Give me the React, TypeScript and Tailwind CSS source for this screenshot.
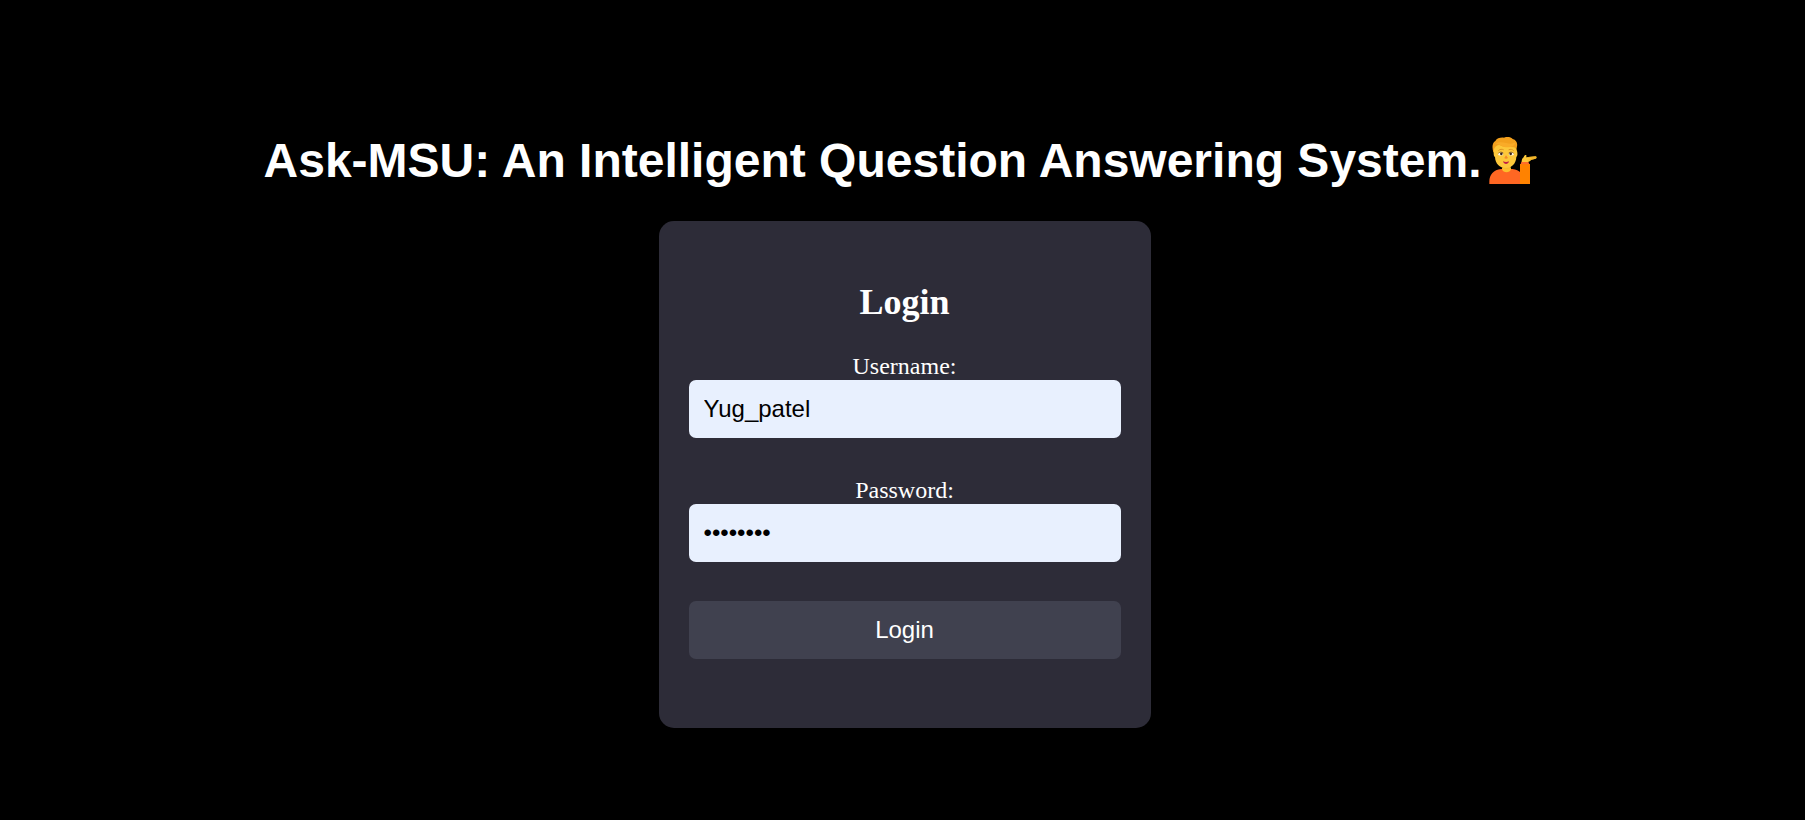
import { useState } from "react";

function TippingHandIcon() {
  return (
    <svg viewBox="30 36 144 144" className="size-12 shrink-0" role="img" aria-label="Person tipping hand">
      <path d="M70 118h25v22H70z" fill="#f5b82e" />
      <path d="M31 177v-8c0-20 13-35 35-37h4c3 10 22 10 25 0h5c12 1 19 5 24 10v35z" fill="#ff6723" />
      <path d="M69 128c6 4 20 4 27 0v5c-3 12-24 12-27 0z" fill="#fcbf2c" />
      <path d="M123 117h30v60h-30z" fill="#ff8200" />
      <path d="M127 110h21l3 8h-26z" fill="#ff6d2b" />
      <path d="M128 111c0-7 2-11 6-14 1-6 5-9 8-6 1 2 0 4-1 6l27-3c6 0 6 5 2 7l-14 4c-3 5-7 6-13 6z" fill="#fdc93b" />
      <path d="M141 97l27-3c6 0 6 5 2 7l-14 4c-4 1-9 1-13 0 6-1 12-3 16-6-6 1-12 1-18-2z" fill="#e9a71e" opacity=".6" />
      <path d="M43 82c-4-14-4-28 6-34 5-9 15-11 26-10 8-4 20-3 26 4 11 3 15 12 13 22l-4 22z" fill="#f3a01d" />
      <path d="M47 68c-3 5-3 11-3 17 0 6 1 10 4 11 1 20 14 33 32 33s31-13 32-33c4-3 4-12 2-18-2-6-5-10-9-11-8-1-15-1-23-1-9 0-14-3-21-6-7 1-11 4-14 8z" fill="#fdc73a" />
      <path d="M50 56c10-7 22-4 32-2 10 3 20 3 28-2-3 11-13 15-24 15-13 0-23-10-36-11z" fill="#f9ab28" />
      <path d="M59 76c4-4 10-4 14-2m17 0c5-2 10-1 13 2" fill="none" stroke="#dc9420" strokeWidth="3" strokeLinecap="round" />
      <ellipse cx="65" cy="87" rx="8" ry="4.5" fill="#fff8e6" />
      <ellipse cx="97" cy="87" rx="8" ry="4.5" fill="#fff8e6" />
      <circle cx="67" cy="86.5" r="4" fill="#3b241b" />
      <circle cx="95" cy="86.5" r="4" fill="#3b241b" />
      <path d="M58 85c3-4 10-5 15-1m16 0c5-4 11-3 15 1" fill="none" stroke="#6b4218" strokeWidth="2" />
      <path d="M81 91l-5 8c2 3 8 3 11 0z" fill="#f38a2a" />
      <path d="M72 109c6 3 12 3 18 0-2 10-15 11-18 0z" fill="#c02046" />
    </svg>
  );
}

const fieldClass =
  "block w-full rounded-[7px] bg-[#e8f0fe] px-[15px] py-[15px] font-['Liberation_Sans',Arial,sans-serif] text-2xl leading-7 text-black outline-none";
const labelClass = "block text-center text-2xl leading-[27px]";

export default function App() {
  const [username, setUsername] = useState("Yug_patel");
  const [password, setPassword] = useState("password");

  return (
    <main className="flex min-h-screen flex-col items-center bg-black px-4 pt-[132px] pb-12 text-white">
      <h1 className="flex items-center gap-2 pr-1 font-['Liberation_Sans',Arial,sans-serif] text-5xl leading-[57px] font-bold">
        <span>Ask-MSU: An Intelligent Question Answering System.</span>
        <TippingHandIcon />
      </h1>
      <div className="mt-8 flex w-full justify-center pl-1">
        <form
          onSubmit={(event) => event.preventDefault()}
          className="w-full max-w-[492px] rounded-[15px] bg-[#2d2c38] px-[30px] pt-[61px] pb-[69px] font-['Liberation_Serif','Times_New_Roman',serif]"
        >
          <h2 className="mb-[30px] text-center text-4xl leading-[41px] font-bold">Login</h2>
          <div className="flex flex-col gap-[39px]">
            <div>
              <label htmlFor="username" className={labelClass}>Username:</label>
              <input
                id="username"
                type="text"
                value={username}
                onChange={(event) => setUsername(event.target.value)}
                className={fieldClass}
              />
            </div>
            <div>
              <label htmlFor="password" className={labelClass}>Password:</label>
              <input
                id="password"
                type="password"
                value={password}
                onChange={(event) => setPassword(event.target.value)}
                className={fieldClass}
              />
            </div>
            <button
              type="submit"
              className="w-full rounded-[7px] bg-[#40414f] py-[15px] font-['Liberation_Sans',Arial,sans-serif] text-2xl leading-7 text-white"
            >
              Login
            </button>
          </div>
        </form>
      </div>
    </main>
  );
}
